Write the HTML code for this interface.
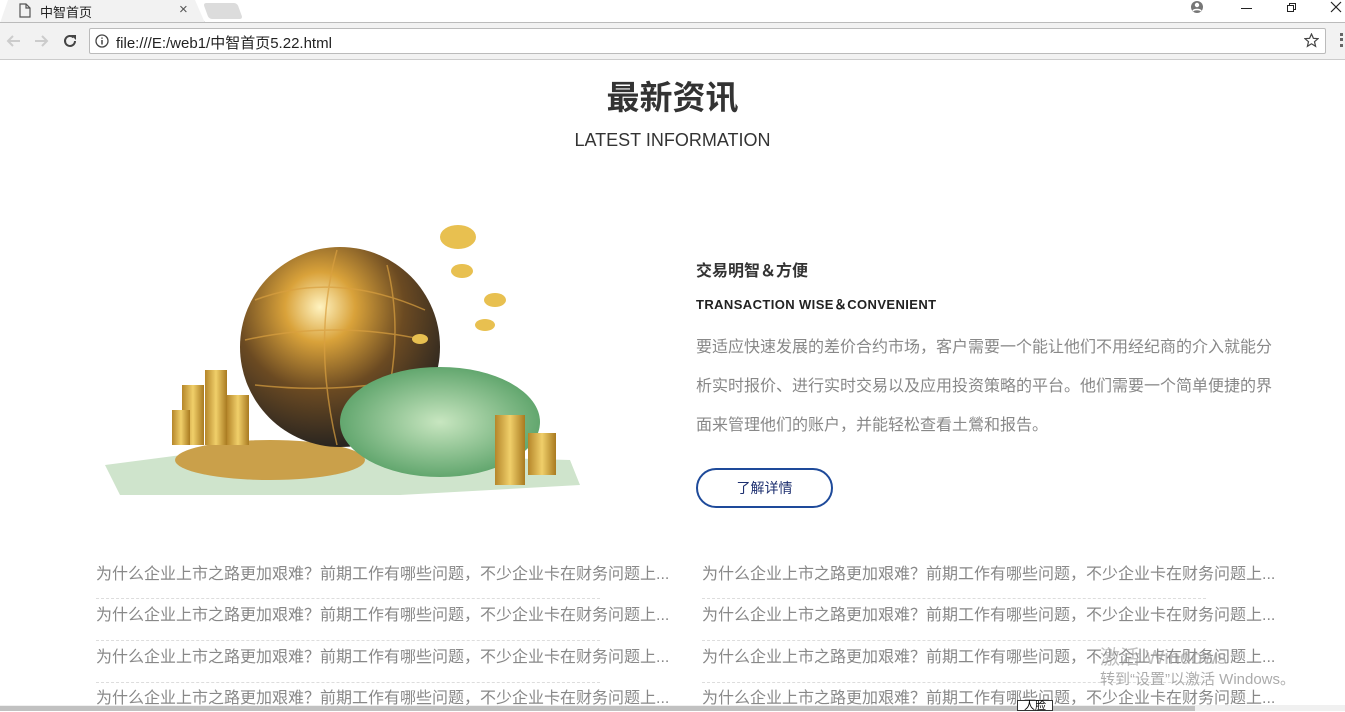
<!DOCTYPE html>
<html><head><meta charset="utf-8"><style>
*{margin:0;padding:0;box-sizing:border-box}
body{width:1345px;height:711px;overflow:hidden;background:#fff;font-family:"Liberation Sans","Noto Sans CJK SC",sans-serif;position:relative}
.abs{position:absolute}
.top{left:0;top:0;width:1345px;height:22px;background:#fff}
.tab{left:0;top:0;width:205px;height:23px;background:#f2f2f2;border-right:1px solid #bbb;clip-path:polygon(8px 0,195px 0,205px 23px,0 23px)}
.bar{left:0;top:22px;width:1345px;height:38px;background:#f2f2f2;border-top:1px solid #bbb;border-bottom:1px solid #ccc}
.addr{left:89px;top:28px;width:1237px;height:26px;background:#fff;border:1px solid #bbb;border-radius:2px}
.li{font-size:16px;color:#888;white-space:nowrap;line-height:20px}
.dash{height:0;border-top:1px dashed #ddd;width:504px}
.p{font-size:16px;color:#888;line-height:39px;width:580px}
</style></head><body>
<div class="abs top"></div>
<div class="abs tab"></div>
<svg class="abs" style="left:19px;top:3px" width="12" height="15" viewBox="0 0 12 15"><path d="M1 1h6l4 4v9H1z M7 1v4h4" fill="none" stroke="#555" stroke-width="1.2"/></svg>
<div class="abs" style="left:40px;top:2px;font-size:13px;color:#222">中智首页</div>
<div class="abs" style="left:179px;top:1px;font-size:15px;color:#555">×</div>
<div class="abs" style="left:206px;top:3px;width:34px;height:16px;background:#dcdcdc;border-radius:3px;transform:skewX(20deg)"></div>
<svg class="abs" style="left:1190px;top:0" width="14" height="14"><circle cx="7" cy="7" r="6" fill="#777"/><circle cx="7" cy="5" r="2.2" fill="#fff"/><path d="M3 11c1-2 7-2 8 0" stroke="#fff" stroke-width="1.6" fill="none"/></svg>
<div class="abs" style="left:1241px;top:8px;width:11px;height:1px;background:#222"></div>
<svg class="abs" style="left:1286px;top:2px" width="11" height="11"><path d="M1.5 3.5h6v6h-6z M3.5 3.5V1.5h6v6h-2" fill="none" stroke="#222"/></svg>
<svg class="abs" style="left:1330px;top:1px" width="12" height="12"><path d="M1 1L11 11M11 1L1 11" stroke="#222" stroke-width="1.2"/></svg>
<div class="abs bar"></div>
<svg class="abs" style="left:6px;top:33px" width="60" height="16"><path d="M14 8H2M7 3L2 8l5 5" stroke="#ccc" stroke-width="2" fill="none"/><path d="M29 8h12M36 3l5 5-5 5" stroke="#ccc" stroke-width="2" fill="none"/></svg>
<svg class="abs" style="left:62px;top:33px" width="16" height="16"><path d="M13 8a5 5 0 1 1-1.5-3.6" stroke="#444" stroke-width="2" fill="none"/><path d="M9 2h5v5z" fill="#444"/></svg>
<div class="abs addr"></div>
<svg class="abs" style="left:95px;top:34px" width="14" height="14"><circle cx="7" cy="7" r="6" stroke="#444" stroke-width="1.3" fill="none"/><path d="M7 6v4.5M7 3.5v1.2" stroke="#444" stroke-width="1.5"/></svg>
<div class="abs" style="left:116px;top:32px;font-size:15px;color:#222">file:///E:/web1/中智首页5.22.html</div>
<svg class="abs" style="left:1304px;top:33px" width="15" height="15" viewBox="0 0 15 15"><path d="M7.5 1l1.9 4.3 4.6.4-3.5 3 1.1 4.6-4.1-2.5-4.1 2.5 1.1-4.6-3.5-3 4.6-.4z" fill="none" stroke="#444" stroke-width="1.2"/></svg>
<div class="abs" style="left:1340px;top:33px;width:3px;height:14px;border-left:3px dotted #666"></div>

<div class="abs" style="left:0;top:76px;width:1345px;text-align:center;font-size:33px;font-weight:bold;color:#333;line-height:44px">最新资讯</div>
<div class="abs" style="left:0;top:129px;width:1345px;text-align:center;font-size:18px;color:#333;line-height:22px">LATEST INFORMATION</div>

<svg class="abs" style="left:100px;top:215px" width="490" height="290" viewBox="0 0 490 290">
<defs>
<radialGradient id="g" cx="0.4" cy="0.3" r="0.7"><stop offset="0" stop-color="#fff3c0"/><stop offset="0.25" stop-color="#d9a23a"/><stop offset="0.6" stop-color="#6b4a22"/><stop offset="1" stop-color="#2a2520"/></radialGradient>
<linearGradient id="c" x1="0" x2="1"><stop offset="0" stop-color="#b5862a"/><stop offset="0.5" stop-color="#f0cf6a"/><stop offset="1" stop-color="#a97a20"/></linearGradient>
<radialGradient id="p" cx="0.5" cy="0.5" r="0.6"><stop offset="0" stop-color="#c8e6c0"/><stop offset="1" stop-color="#4e9a5e"/></radialGradient>
</defs>
<path d="M5 250L120 235 470 245 480 270 300 280 20 280z" fill="#cfe4cc"/>
<ellipse cx="170" cy="245" rx="95" ry="20" fill="#caa04a"/>
<circle cx="240" cy="132" r="100" fill="url(#g)"/>
<path d="M155 85q80-30 170 10M145 125q90-20 180 0M155 170q90 10 170-10M237 35q-25 90 0 195M287 50q20 80-10 170" stroke="#d9a040" stroke-width="1.5" fill="none" opacity="0.7"/>
<ellipse cx="340" cy="207" rx="100" ry="55" fill="url(#p)"/>
<rect x="82" y="170" width="22" height="60" fill="url(#c)"/>
<rect x="105" y="155" width="22" height="75" fill="url(#c)"/>
<rect x="127" y="180" width="22" height="50" fill="url(#c)"/>
<rect x="72" y="195" width="18" height="35" fill="url(#c)"/>
<rect x="395" y="200" width="30" height="70" fill="url(#c)"/>
<rect x="428" y="218" width="28" height="42" fill="url(#c)"/>
<ellipse cx="358" cy="22" rx="18" ry="12" fill="#e8c050"/>
<ellipse cx="362" cy="56" rx="11" ry="7" fill="#e8c050"/>
<ellipse cx="395" cy="85" rx="11" ry="7" fill="#e8c050"/>
<ellipse cx="385" cy="110" rx="10" ry="6" fill="#e8c050"/>
<ellipse cx="320" cy="124" rx="8" ry="5" fill="#e8c050"/>
</svg>

<div class="abs" style="left:696px;top:257px;font-size:16px;font-weight:bold;color:#333">交易明智＆方便</div>
<div class="abs" style="left:696px;top:294px;font-size:13px;font-weight:bold;color:#222;letter-spacing:0.4px">TRANSACTION WISE＆CONVENIENT</div>
<div class="abs p" style="left:696px;top:328px">要适应快速发展的差价合约市场，客户需要一个能让他们不用经纪商的介入就能分析实时报价、进行实时交易以及应用投资策略的平台。他们需要一个简单便捷的界面来管理他们的账户，并能轻松查看土鶯和报告。</div>
<div class="abs" style="left:696px;top:468px;width:137px;height:40px;border:2px solid #1e4a9a;border-radius:20px;text-align:center;line-height:36px;font-size:14px;color:#1e3070">了解详情</div>

<div class="abs li" style="left:96px;top:565px">为什么企业上市之路更加艰难？前期工作有哪些问题，不少企业卡在财务问题上...</div>
<div class="abs dash" style="left:96px;top:598px"></div>
<div class="abs li" style="left:96px;top:606px">为什么企业上市之路更加艰难？前期工作有哪些问题，不少企业卡在财务问题上...</div>
<div class="abs dash" style="left:96px;top:640px"></div>
<div class="abs li" style="left:96px;top:648px">为什么企业上市之路更加艰难？前期工作有哪些问题，不少企业卡在财务问题上...</div>
<div class="abs dash" style="left:96px;top:682px"></div>
<div class="abs li" style="left:96px;top:689px">为什么企业上市之路更加艰难？前期工作有哪些问题，不少企业卡在财务问题上...</div>

<div class="abs li" style="left:702px;top:565px">为什么企业上市之路更加艰难？前期工作有哪些问题，不少企业卡在财务问题上...</div>
<div class="abs dash" style="left:702px;top:598px"></div>
<div class="abs li" style="left:702px;top:606px">为什么企业上市之路更加艰难？前期工作有哪些问题，不少企业卡在财务问题上...</div>
<div class="abs dash" style="left:702px;top:640px"></div>
<div class="abs li" style="left:702px;top:648px">为什么企业上市之路更加艰难？前期工作有哪些问题，不少企业卡在财务问题上...</div>
<div class="abs dash" style="left:702px;top:682px"></div>
<div class="abs li" style="left:702px;top:689px">为什么企业上市之路更加艰难？前期工作有哪些问题，不少企业卡在财务问题上...</div>

<div class="abs" style="left:1100px;top:641px;font-size:20px;color:rgba(150,150,150,0.6)">激活 Windows</div>
<div class="abs" style="left:1100px;top:668px;font-size:15px;color:rgba(150,150,150,0.8)">转到“设置”以激活 Windows。</div>

<div class="abs" style="left:0;top:705px;width:1345px;height:6px;background:#f0f0f0"></div>
<div class="abs" style="left:0;top:706px;width:1195px;height:5px;background:#c1c1c1"></div>
<div class="abs" style="left:1017px;top:700px;width:36px;height:11px;background:#fff;border:1px solid #333;font-size:11px;line-height:11px;text-align:center">人脸</div>
</body></html>
